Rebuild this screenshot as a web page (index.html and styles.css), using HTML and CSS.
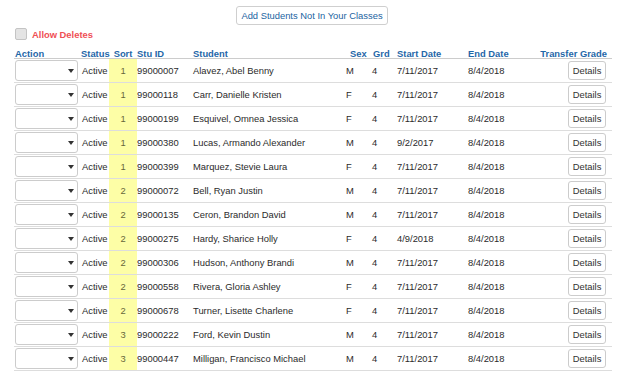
FILE: index.html
```html
<!DOCTYPE html>
<html>
<head>
<meta charset="utf-8">
<link rel="stylesheet" href="styles.css">
</head>
<body>
<div class="toolbar">
  <button class="add-btn">Add Students Not In Your Classes</button>
</div>
<label class="allow">
  <span class="check"></span>
  <span class="allow-text">Allow Deletes</span>
</label>
<table class="roster">
  <colgroup>
    <col class="c-action"><col class="c-status"><col class="c-sort"><col class="c-id"><col class="c-name"><col class="c-sex"><col class="c-grd"><col class="c-start"><col class="c-end"><col class="c-tg">
  </colgroup>
  <thead>
    <tr>
      <th class="h-action">Action</th><th class="h-status">Status</th><th class="h-sort">Sort</th><th>Stu ID</th><th>Student</th><th class="h-sex">Sex</th><th class="h-grd">Grd</th><th>Start Date</th><th>End Date</th><th class="h-tg">Transfer Grade</th>
    </tr>
  </thead>
  <tbody>
    <tr><td><span class="dd"></span></td><td class="status">Active</td><td class="sort">1</td><td>99000007</td><td>Alavez, Abel Benny</td><td class="sex">M</td><td>4</td><td>7/11/2017</td><td>8/4/2018</td><td class="tg"><button class="det">Details</button></td></tr>
    <tr><td><span class="dd"></span></td><td class="status">Active</td><td class="sort">1</td><td>99000118</td><td>Carr, Danielle Kristen</td><td class="sex">F</td><td>4</td><td>7/11/2017</td><td>8/4/2018</td><td class="tg"><button class="det">Details</button></td></tr>
    <tr><td><span class="dd"></span></td><td class="status">Active</td><td class="sort">1</td><td>99000199</td><td>Esquivel, Omnea Jessica</td><td class="sex">F</td><td>4</td><td>7/11/2017</td><td>8/4/2018</td><td class="tg"><button class="det">Details</button></td></tr>
    <tr><td><span class="dd"></span></td><td class="status">Active</td><td class="sort">1</td><td>99000380</td><td>Lucas, Armando Alexander</td><td class="sex">M</td><td>4</td><td>9/2/2017</td><td>8/4/2018</td><td class="tg"><button class="det">Details</button></td></tr>
    <tr><td><span class="dd"></span></td><td class="status">Active</td><td class="sort">1</td><td>99000399</td><td>Marquez, Stevie Laura</td><td class="sex">F</td><td>4</td><td>7/11/2017</td><td>8/4/2018</td><td class="tg"><button class="det">Details</button></td></tr>
    <tr><td><span class="dd"></span></td><td class="status">Active</td><td class="sort">2</td><td>99000072</td><td>Bell, Ryan Justin</td><td class="sex">M</td><td>4</td><td>7/11/2017</td><td>8/4/2018</td><td class="tg"><button class="det">Details</button></td></tr>
    <tr><td><span class="dd"></span></td><td class="status">Active</td><td class="sort">2</td><td>99000135</td><td>Ceron, Brandon David</td><td class="sex">M</td><td>4</td><td>7/11/2017</td><td>8/4/2018</td><td class="tg"><button class="det">Details</button></td></tr>
    <tr><td><span class="dd"></span></td><td class="status">Active</td><td class="sort">2</td><td>99000275</td><td>Hardy, Sharice Holly</td><td class="sex">F</td><td>4</td><td>4/9/2018</td><td>8/4/2018</td><td class="tg"><button class="det">Details</button></td></tr>
    <tr><td><span class="dd"></span></td><td class="status">Active</td><td class="sort">2</td><td>99000306</td><td>Hudson, Anthony Brandi</td><td class="sex">M</td><td>4</td><td>7/11/2017</td><td>8/4/2018</td><td class="tg"><button class="det">Details</button></td></tr>
    <tr><td><span class="dd"></span></td><td class="status">Active</td><td class="sort">2</td><td>99000558</td><td>Rivera, Gloria Ashley</td><td class="sex">F</td><td>4</td><td>7/11/2017</td><td>8/4/2018</td><td class="tg"><button class="det">Details</button></td></tr>
    <tr><td><span class="dd"></span></td><td class="status">Active</td><td class="sort">2</td><td>99000678</td><td>Turner, Lisette Charlene</td><td class="sex">F</td><td>4</td><td>7/11/2017</td><td>8/4/2018</td><td class="tg"><button class="det">Details</button></td></tr>
    <tr><td><span class="dd"></span></td><td class="status">Active</td><td class="sort">3</td><td>99000222</td><td>Ford, Kevin Dustin</td><td class="sex">M</td><td>4</td><td>7/11/2017</td><td>8/4/2018</td><td class="tg"><button class="det">Details</button></td></tr>
    <tr><td><span class="dd"></span></td><td class="status">Active</td><td class="sort">3</td><td>99000447</td><td>Milligan, Francisco Michael</td><td class="sex">M</td><td>4</td><td>7/11/2017</td><td>8/4/2018</td><td class="tg"><button class="det">Details</button></td></tr>
  </tbody>
</table>
</body>
</html>
```

FILE: styles.css
```css
html, body {
  margin: 0;
  padding: 0;
  background: #ffffff;
}
body {
  font-family: "Liberation Sans", Arial, sans-serif;
  font-size: 9.4px;
  color: #2b2b2b;
  overflow: hidden;
}
.toolbar {
  display: flex;
  justify-content: center;
  padding-top: 6px;
}
.add-btn {
  font-family: "Liberation Sans", Arial, sans-serif;
  font-size: 9.4px;
  color: #22649f;
  background: #ffffff;
  border: 1px solid #cfcfcf;
  border-radius: 3px;
  height: 19px;
  width: 152px;
  padding: 0;
  margin: 0;
}
.allow {
  display: flex;
  align-items: center;
  margin: 3px 0 0 15px;
  height: 12px;
}
.check {
  width: 10px;
  height: 10px;
  border: 1px solid #c4c4c4;
  background: #e4e4e4;
  border-radius: 2px;
}
.allow-text {
  margin-left: 5px;
  color: #ef4f55;
  font-weight: bold;
}
.roster {
  margin: 4px 0 0 14px;
  width: 598px;
  table-layout: fixed;
  border-collapse: collapse;
  border-spacing: 0;
}
.c-action { width: 66px; }
.c-status { width: 29px; }
.c-sort { width: 28px; }
.c-id { width: 56px; }
.c-name { width: 152px; }
.c-sex { width: 27px; }
.c-grd { width: 25px; }
.c-start { width: 71px; }
.c-end { width: 62px; }
.c-tg { width: 82px; }
.roster th {
  height: 14px;
  padding: 0;
  text-align: left;
  vertical-align: bottom;
  line-height: 8px;
  color: #1f67a8;
  font-weight: bold;
  border-bottom: 1px solid #cccccc;
  white-space: nowrap;
}
.roster th.h-action { padding-left: 1px; }
.roster th.h-status { padding-left: 1px; }
.roster th.h-sort { text-align: center; }
.roster th.h-sex { padding-left: 5px; }
.roster th.h-grd { padding-left: 1px; }
.roster th.h-tg { text-align: right; padding-right: 5px; }
.roster td {
  height: 23px;
  padding: 0;
  vertical-align: middle;
  border-bottom: 1px solid #dddddd;
  white-space: nowrap;
  line-height: 11px;
}
.roster td.status { padding-left: 2px; }
.roster td.sort {
  background: #fdfea6;
  text-align: center;
  color: #66663a;
}
.roster td.sex { padding-left: 1px; }
.roster td.tg { text-align: right; padding-right: 6px; }
.dd {
  display: block;
  position: relative;
  margin-left: 1px;
  width: 61px;
  height: 19px;
  border: 1px solid #cccccc;
  border-radius: 3px;
  background: #ffffff;
}
.dd::after {
  content: "";
  position: absolute;
  left: 52px;
  top: 8px;
  border-left: 3px solid transparent;
  border-right: 3px solid transparent;
  border-top: 4px solid #333333;
}
.det {
  font-family: "Liberation Sans", Arial, sans-serif;
  font-size: 9.4px;
  color: #333333;
  background: #ffffff;
  border: 1px solid #cccccc;
  border-radius: 3px;
  width: 38px;
  height: 19px;
  padding: 0;
  margin: 0;
  vertical-align: middle;
}
```
